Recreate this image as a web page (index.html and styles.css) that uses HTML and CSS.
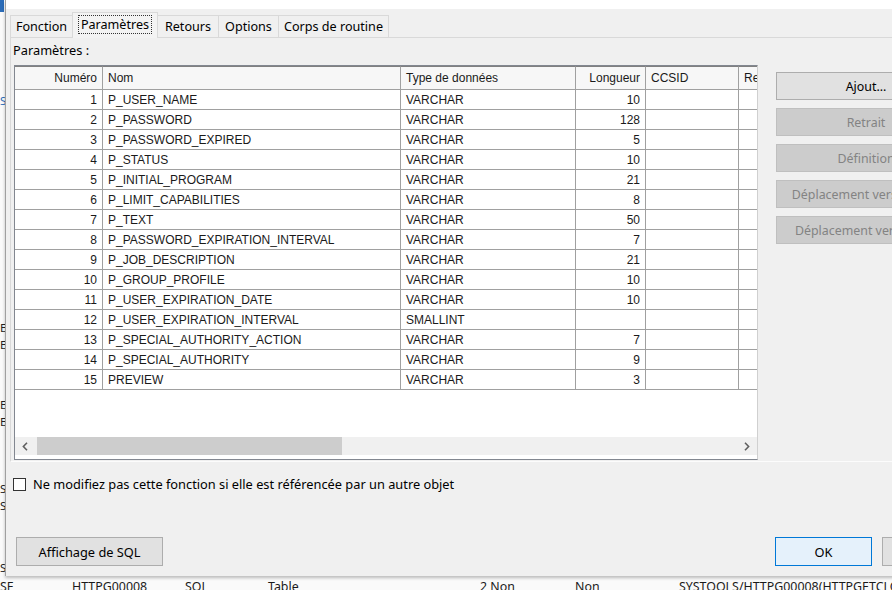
FILE: index.html
```html
<!DOCTYPE html>
<html lang="fr">
<head>
  <meta charset="UTF-8" />
  <title>Paramètres</title>
  <link rel="stylesheet" href="styles.css">
</head>
<body>
  <div class="backwin">
    <div class="bg-icon"></div>
    <div class="bg-gap gap-1"></div>
    <div class="bg-row blue">S</div>
    <div class="bg-gap gap-2"></div>
    <div class="bg-row">E</div>
    <div class="bg-row">E</div>
    <div class="bg-gap gap-3"></div>
    <div class="bg-row">E</div>
    <div class="bg-row">E</div>
    <div class="bg-gap gap-4"></div>
    <div class="bg-row">S</div>
    <div class="bg-row">S</div>
    <div class="bg-gap gap-5"></div>
    <div class="bg-row">S</div>
    <div class="bg-list-row">
      <span class="c1">SF</span>
      <span class="c2">HTTPG00008</span>
      <span class="c3">SQL</span>
      <span class="c4">Table</span>
      <span class="c5">2 Non</span>
      <span class="c6">Non</span>
      <span class="c7">SYSTOOLS/HTTPG00008(HTTPGETCLOB)</span>
    </div>
  </div>

  <div class="dialog">
    <div class="titlebar"></div>

    <div class="tabs">
      <div class="tab t-fonction">Fonction</div>
      <div class="tab t-params selected"><span class="focus">Paramètres</span></div>
      <div class="tab t-retours">Retours</div>
      <div class="tab t-options">Options</div>
      <div class="tab t-corps">Corps de routine</div>
    </div>

    <div class="panel">
      <div class="panel-label">Paramètres :</div>
      <div class="panel-row">
        <div class="grid-frame">
          <div class="grid-clip">
            <table class="grid">
              <colgroup>
                <col class="w-num"><col class="w-nom"><col class="w-type"><col class="w-len"><col class="w-ccsid"><col class="w-rest">
              </colgroup>
              <thead>
                <tr>
                  <th class="num">Numéro</th>
                  <th>Nom</th>
                  <th>Type de données</th>
                  <th class="num">Longueur</th>
                  <th>CCSID</th>
                  <th>Remarques</th>
                </tr>
              </thead>
              <tbody>
                <tr><td class="num">1</td><td>P_USER_NAME</td><td>VARCHAR</td><td class="num">10</td><td></td><td></td></tr>
                <tr><td class="num">2</td><td>P_PASSWORD</td><td>VARCHAR</td><td class="num">128</td><td></td><td></td></tr>
                <tr><td class="num">3</td><td>P_PASSWORD_EXPIRED</td><td>VARCHAR</td><td class="num">5</td><td></td><td></td></tr>
                <tr><td class="num">4</td><td>P_STATUS</td><td>VARCHAR</td><td class="num">10</td><td></td><td></td></tr>
                <tr><td class="num">5</td><td>P_INITIAL_PROGRAM</td><td>VARCHAR</td><td class="num">21</td><td></td><td></td></tr>
                <tr><td class="num">6</td><td>P_LIMIT_CAPABILITIES</td><td>VARCHAR</td><td class="num">8</td><td></td><td></td></tr>
                <tr><td class="num">7</td><td>P_TEXT</td><td>VARCHAR</td><td class="num">50</td><td></td><td></td></tr>
                <tr><td class="num">8</td><td>P_PASSWORD_EXPIRATION_INTERVAL</td><td>VARCHAR</td><td class="num">7</td><td></td><td></td></tr>
                <tr><td class="num">9</td><td>P_JOB_DESCRIPTION</td><td>VARCHAR</td><td class="num">21</td><td></td><td></td></tr>
                <tr><td class="num">10</td><td>P_GROUP_PROFILE</td><td>VARCHAR</td><td class="num">10</td><td></td><td></td></tr>
                <tr><td class="num">11</td><td>P_USER_EXPIRATION_DATE</td><td>VARCHAR</td><td class="num">10</td><td></td><td></td></tr>
                <tr><td class="num">12</td><td>P_USER_EXPIRATION_INTERVAL</td><td>SMALLINT</td><td class="num"></td><td></td><td></td></tr>
                <tr><td class="num">13</td><td>P_SPECIAL_AUTHORITY_ACTION</td><td>VARCHAR</td><td class="num">7</td><td></td><td></td></tr>
                <tr><td class="num">14</td><td>P_SPECIAL_AUTHORITY</td><td>VARCHAR</td><td class="num">9</td><td></td><td></td></tr>
                <tr><td class="num">15</td><td>PREVIEW</td><td>VARCHAR</td><td class="num">3</td><td></td><td></td></tr>
              </tbody>
            </table>
          </div>
          <div class="hscroll">
            <div class="arrow">
              <svg width="6" height="9" viewBox="0 0 6 9"><path d="M5 0.8 L1.4 4.5 L5 8.2" fill="none" stroke="#606060" stroke-width="1.6"/></svg>
            </div>
            <div class="thumb"></div>
            <div class="track"></div>
            <div class="arrow">
              <svg width="6" height="9" viewBox="0 0 6 9"><path d="M1 0.8 L4.6 4.5 L1 8.2" fill="none" stroke="#606060" stroke-width="1.6"/></svg>
            </div>
          </div>
        </div>

        <div class="side-buttons">
          <button class="btn">Ajout...</button>
          <button class="btn" disabled>Retrait</button>
          <button class="btn" disabled>Définition</button>
          <button class="btn" disabled>Déplacement vers le haut</button>
          <button class="btn" disabled>Déplacement vers le bas</button>
        </div>
      </div>
    </div>

    <label class="check-row">
      <span class="checkbox"></span>
      <span>Ne modifiez pas cette fonction si elle est référencée par un autre objet</span>
    </label>

    <div class="footer">
      <button class="btn btn-sql">Affichage de SQL</button>
      <div class="footer-right">
        <button class="btn btn-ok default">OK</button>
        <button class="btn btn-ok">Annuler</button>
      </div>
    </div>
  </div>
</body>
</html>
```

FILE: styles.css
```css
html, body {
  margin: 0;
  padding: 0;
}

body {
  width: 892px;
  height: 590px;
  overflow: hidden;
  position: relative;
  background: #fafafa;
  font-family: "Noto Sans", "Liberation Sans", Arial, sans-serif;
  font-size: 12.8px;
  color: #000;
}

/* window behind the dialog */
.backwin {
  display: flex;
  flex-direction: column;
  height: 100%;
}

.backwin > div { flex: none; }

.bg-icon {
  width: 4px;
  height: 12px;
  background: #2b6cb8;
}

.gap-1 { height: 80px; }
.gap-2 { height: 210px; }
.gap-3 { height: 43px; }
.gap-4 { height: 50px; }
.gap-5 { height: 45px; }

.bg-row {
  width: 6px;
  height: 17px;
  line-height: 17px;
  font-size: 11.5px;
  text-align: right;
  overflow: hidden;
  color: #222;
}

.bg-row.blue { color: #2b6cb8; }

.bg-list-row {
  display: flex;
  height: 17px;
  padding-top: 2px;
  line-height: 17px;
  font-size: 12.4px;
  white-space: nowrap;
  color: #1a1a1a;
}

.bg-list-row span { flex: none; }
.c1 { width: 72px; }
.c2 { width: 113px; }
.c3 { width: 83px; }
.c4 { width: 212px; }
.c5 { width: 95px; }
.c6 { width: 104px; }

/* dialog */
.dialog {
  position: absolute;
  left: 5px;
  top: 0;
  width: 900px;
  height: 576px;
  background: #f0f0f0;
  border-left: 1px solid #a0a0a0;
  box-shadow: 0 2px 3px rgba(0, 0, 0, 0.25);
  display: flex;
  flex-direction: column;
}

.titlebar {
  height: 9px;
  background: #fff;
}

.tabs {
  display: flex;
  align-items: flex-end;
  height: 28px;
  padding-left: 4px;
  font-size: 12.6px;
}

.tab {
  box-sizing: border-box;
  height: 22px;
  line-height: 21px;
  border: 1px solid #d9d9d9;
  border-bottom: none;
  text-align: center;
  background: #f0f0f0;
  margin-left: -1px;
  white-space: nowrap;
}

.t-fonction { width: 63px; margin-left: 0; }
.t-params { width: 86px; }
.t-retours { width: 62px; }
.t-options { width: 61px; }
.t-corps { width: 111px; }

.tab.selected {
  height: 26px;
  margin-bottom: -1px;
  padding-top: 1px;
  line-height: 22px;
  background: #f3f3f3;
  position: relative;
  z-index: 1;
}

.focus {
  display: inline-block;
  border: 1px dotted #333;
  padding: 0 2px;
  line-height: 17px;
}

.panel {
  margin-left: 4px;
  border-top: 1px solid #d9d9d9;
  border-left: 1px solid #d9d9d9;
  border-bottom: 1px solid #fcfcfc;
  padding: 0 0 1px 2px;
}

.panel-label {
  margin-top: 5px;
  height: 14px;
  line-height: 14px;
}

.panel-row {
  display: flex;
  align-items: flex-start;
  margin-top: 8px;
}

.grid-frame {
  box-sizing: border-box;
  flex: none;
  width: 744px;
  height: 395px;
  margin-left: 1px;
  border: 1px solid #828790;
  border-right-color: #d0d0d0;
  background: #fff;
  display: flex;
  flex-direction: column;
}

.grid-clip {
  height: 371px;
  overflow: hidden;
}

.grid {
  table-layout: fixed;
  border-collapse: separate;
  border-spacing: 0;
  width: 854px;
  font-family: "Liberation Sans", Arial, sans-serif;
  font-size: 12px;
  color: #1a1a1a;
}

.w-num { width: 88px; }
.w-nom { width: 298px; }
.w-type { width: 175px; }
.w-len { width: 70px; }
.w-ccsid { width: 93px; }
.w-rest { width: 130px; }

.grid th, .grid td {
  box-sizing: border-box;
  border-right: 1px solid #a0a0a0;
  border-bottom: 1px solid #a0a0a0;
  padding: 0 4px 0 5px;
  text-align: left;
  font-weight: normal;
  white-space: nowrap;
  overflow: hidden;
}

.grid th {
  height: 24px;
  border-top: 1px solid #808080;
  background: #f7f7f7;
}

.grid td {
  height: 20px;
}

.grid .num {
  text-align: right;
  padding: 0 5px 0 4px;
}

.hscroll {
  display: flex;
  height: 18px;
  margin-bottom: 4px;
  background: #f0f0f0;
}

.arrow {
  width: 20px;
  display: flex;
  align-items: center;
  justify-content: center;
}

.thumb {
  width: 305px;
  margin-left: 2px;
  background: #cdcdcd;
}

.track { flex: 1; }

.side-buttons {
  display: flex;
  flex-direction: column;
  gap: 8px;
  margin-left: 18px;
  padding-top: 7px;
}

.btn {
  box-sizing: border-box;
  flex: none;
  height: 28px;
  width: 180px;
  padding: 0;
  border: 1px solid #adadad;
  background: #e1e1e1;
  font-family: "Noto Sans", "Liberation Sans", Arial, sans-serif;
  font-size: 12.4px;
  color: #000;
  text-align: center;
  white-space: nowrap;
}

.btn:disabled {
  background: #cccccc;
  border-color: #bfbfbf;
  color: #838383;
}

.check-row {
  display: flex;
  align-items: center;
  gap: 7px;
  margin: 15px 0 0 7px;
  height: 14px;
}

.checkbox {
  box-sizing: border-box;
  width: 13px;
  height: 13px;
  border: 1px solid #333;
  background: #fff;
}

.footer {
  display: flex;
  align-items: flex-start;
  margin-top: 46px;
  padding-left: 10px;
}

.btn-sql {
  width: 147px;
  height: 29px;
  font-size: 12.8px;
}

.footer-right {
  display: flex;
  flex: none;
  gap: 10px;
  margin-left: 612px;
}

.btn-ok {
  width: 97px;
  height: 29px;
  font-size: 12.8px;
}

.btn.default {
  border-color: #0078d7;
  background: #e5f1fb;
}
```
